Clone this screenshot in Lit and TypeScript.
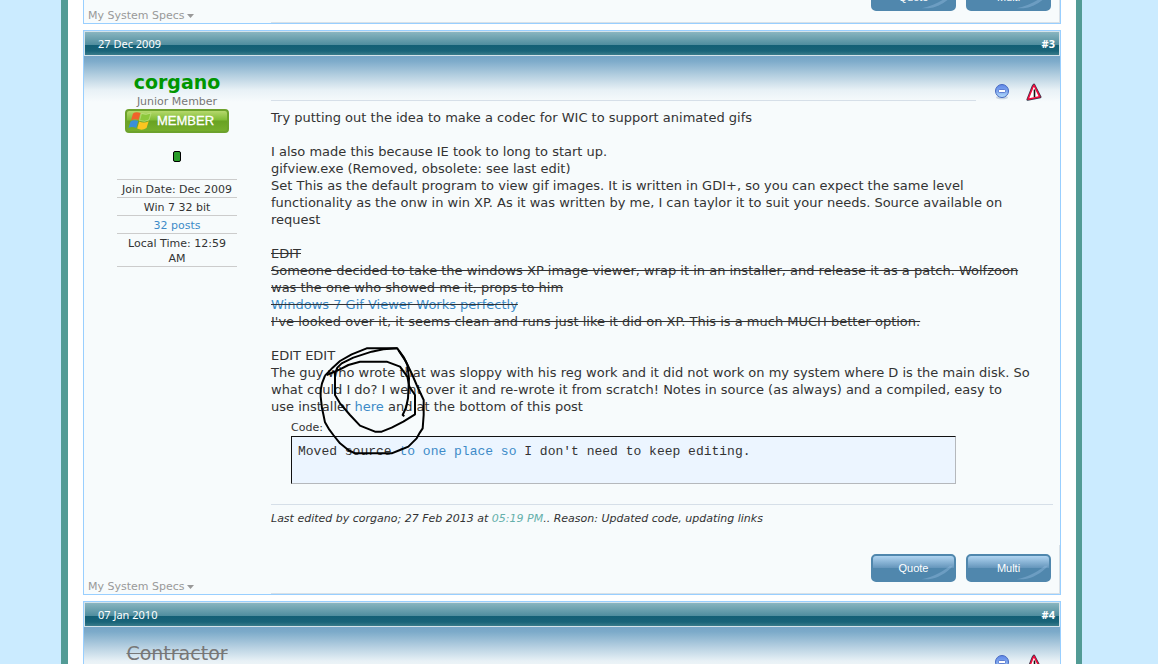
import { LitElement, html, css, svg, nothing } from "lit";
import { customElement, property } from "lit/decorators.js";

const swoosh = html`<svg class="swoosh" viewBox="0 0 40 16" aria-hidden="true">
  <path d="M2 16C16 13 27 7 35 0h4C31 9 20 15 10 16z" fill="#8db8dc" opacity=".45" />
</svg>`;

@customElement("glossy-button")
class GlossyButton extends LitElement {
  @property() label = "";

  static styles = css`
    :host {
      display: block;
    }
    .button {
      position: relative;
      display: block;
      width: 85px;
      height: 28px;
      padding: 0;
      border: 2px solid #5087ad;
      border-radius: 5px;
      overflow: hidden;
      background: linear-gradient(#b0d4f1 0, #6495bb 12px, #5087ad 12px);
      color: #fff;
      font: 11px/24px "Liberation Sans", Arial, sans-serif;
      cursor: pointer;
    }
    .swoosh {
      position: absolute;
      right: 0;
      bottom: 0;
      width: 34px;
      height: 15px;
    }
  `;

  render() {
    return html`<button class="button" type="button">${swoosh}${this.label}</button>`;
  }
}

@customElement("member-badge")
class MemberBadge extends LitElement {
  static styles = css`
    :host {
      display: block;
    }
    .badge {
      display: flex;
      align-items: center;
      gap: 5px;
      box-sizing: border-box;
      width: 104px;
      height: 24px;
      padding-left: 1px;
      border: 2px solid #6da22c;
      border-radius: 4px;
      background: linear-gradient(#b5d86c 0, #80bc35 9px, #69a222 10px, #76ae2c 100%);
      color: #fff;
      font: 13px/20px "Liberation Sans", Arial, sans-serif;
      -webkit-text-stroke: 0.3px #fff;
    }
    .flag {
      flex: none;
      width: 24px;
      height: 20px;
    }
  `;

  render() {
    return html`<div class="badge">
      <svg class="flag" viewBox="0 0 24 20" aria-hidden="true">
        <path d="M5 2.500Q8 .300 12.500 2L10.500 9Q7 7.500 3 9.500z" fill="#f0632a" />
        <path d="M13.500 2.500Q18 4.500 23 2L21 9Q17 11.500 11.500 9.500z" fill="#8cc83c" stroke="#d4eea0" stroke-width=".5" />
        <path d="M2.500 10.500Q6 8.500 10.200 10L8.200 17Q4 15 .5 17z" fill="#3a8fd8" />
        <path d="M11.200 10.500Q16 12.500 20.700 10.200L18.500 17Q14 20 9.200 17.500z" fill="#fcc520" />
      </svg>
      MEMBER
    </div>`;
  }
}

@customElement("forum-post")
class ForumPost extends LitElement {
  @property() date = "";
  @property() number = "";
  @property() kind = "full";

  static styles = css`
    :host {
      display: block;
      border: 1px solid #99cfff;
      background: #f7fbfc;
    }
    .bar {
      display: flex;
      justify-content: space-between;
      box-sizing: border-box;
      height: 25px;
      padding: 0 4px 0 13px;
      border: 1px solid #d5e3ea;
      background: linear-gradient(#89b5c0 0, #4f8d9e 13px, #135f75 13px, #196378 19px, #3a7c8b 100%);
      color: #fff;
      font: 11px/24px "Noto Sans", Tahoma, sans-serif;
    }
    .number {
      color: #fff;
      font-weight: bold;
      text-decoration: none;
    }
    .body {
      display: grid;
      grid-template-columns: 187px minmax(0, 1fr);
      min-height: 200px;
      background: linear-gradient(#76a4c6 0, #7dabca 5px, #b6d0e1 20px, #e8f1f6 34px, #f7fbfc 46px) top / 100% 46px
        no-repeat;
    }
    .user {
      display: flex;
      flex-direction: column;
      align-items: center;
      padding: 14px 1px 0 0;
      text-align: center;
    }
    .message {
      position: relative;
      padding-right: 7px;
    }
    .tools {
      display: grid;
      grid-template-columns: minmax(0, 1fr) auto;
      column-gap: 18px;
      height: 53px;
    }
    .rule {
      height: 44px;
      border-bottom: 1px solid #d6dfe8;
    }
    .icons {
      display: flex;
      gap: 16px;
      padding: 27px 11px 0 0;
    }
    .icon-button {
      width: 16px;
      height: 18px;
      padding: 0;
      border: 0;
      background: none;
      cursor: pointer;
    }
    .icon {
      display: block;
      width: 16px;
      height: 18px;
    }
    .foot {
      display: grid;
      grid-template-columns: 187px minmax(0, 1fr);
      height: 49px;
    }
    .specs {
      align-self: end;
      display: flex;
      align-items: center;
      gap: 2px;
      padding-left: 4px;
      color: #999;
      font-size: 11px;
      line-height: 15px;
      text-decoration: none;
    }
    .caret {
      width: 7px;
      height: 4px;
    }
    .actions {
      display: flex;
      justify-content: flex-end;
      gap: 10px;
      box-sizing: border-box;
      padding: 9px 8px 0 0;
      border: solid #d9e1e7;
      border-width: 0 1px 1px 0;
    }
  `;

  render() {
    return html`
      ${this.kind === "tail"
        ? nothing
        : html`<div class="bar">
              <span>${this.date}</span><a class="number" href="#post">${this.number}</a>
            </div>
            <div class="body">
              <div class="user"><slot name="user"></slot></div>
              <div class="message">
                <div class="tools">
                  <div class="rule"></div>
                  <div class="icons">
                    <button class="icon-button" type="button" aria-label="Reputation">
                      <svg class="icon" viewBox="0 0 16 18">
                        <defs>
                          <linearGradient id="orb" x2="0" y2="1">
                            <stop offset="0" stop-color="#5f86e8" />
                            <stop offset=".5" stop-color="#7da6ee" />
                            <stop offset="1" stop-color="#b8e0fc" />
                          </linearGradient>
                        </defs>
                        <ellipse cx="8" cy="14.500" rx="6" ry="1.800" fill="#9fb2c8" opacity=".5" />
                        <circle cx="8" cy="8" r="6.500" fill="url(#orb)" stroke="#4668c0" />
                        <rect x="4.500" y="6.500" width="7" height="3" rx="1" fill="#fff" stroke="#4668c8" stroke-width=".8" />
                      </svg>
                    </button>
                    <button class="icon-button" type="button" aria-label="Report">
                      <svg class="icon" viewBox="0 0 16 18">
                        <path
                          d="M8 1.800L14.300 14L1.600 16.600L6.800 3.500z"
                          fill="#fff"
                          stroke="#32394c"
                          stroke-width="2.400"
                          stroke-linejoin="round"
                        />
                        <path
                          d="M8 2.200L13.800 13.800L2 16.200L7 3.800z"
                          fill="#fff"
                          stroke="#f00a3c"
                          stroke-width="1.600"
                          stroke-linejoin="round"
                        />
                        <path d="M8.500 6.500v7.500" stroke="#141414" stroke-width="1.600" />
                      </svg>
                    </button>
                  </div>
                </div>
                <slot></slot>
              </div>
            </div>`}
      <div class="foot">
        <a class="specs" href="#specs">
          My System Specs
          <svg class="caret" viewBox="0 0 7 4" aria-hidden="true"><path d="M0 0h7L3.500 4z" fill="#999" /></svg>
        </a>
        <div class="actions">
          <glossy-button label="Quote"></glossy-button>
          <glossy-button label="Multi"></glossy-button>
        </div>
      </div>
    `;
  }
}

const scribble = svg`
  <path d="M75 122L66 145L62 165V185L66 220L70 238L75 262L88 284L100 300L120 325L145 345L165 355H275L300 345L325 335L350 310L360 292L368 280L371 240V195L350 150L335 115L318 80L292 40H200L155 58L120 78L98 98L75 122" />
  <path d="M80 120L120 103L145 90L180 80H260L300 95L322 125L328 155L345 180V238L310 260L275 278L245 290H225L180 272L150 240L120 205L105 180V115L112 98L125 85L160 68L215 50L250 43L292 40" />
  <path d="M296 46L312 68L322 90L327 130L324 190L318 218L308 240L313 244" />`;

@customElement("app-root")
class AppRoot extends LitElement {
  static styles = css`
    :host {
      display: block;
      box-sizing: border-box;
      height: 100vh;
      overflow: hidden;
      padding: 0 76px 0 61px;
      background: #cbebff;
      color: #333;
      font: 11px/15px "DejaVu Sans", Verdana, sans-serif;
    }
    .sheet {
      box-sizing: border-box;
      min-height: 100vh;
      padding: 0 15px;
      border: solid #529b95;
      border-width: 0 6px 0 7px;
      background: #fff;
    }
    .feed {
      display: flex;
      flex-direction: column;
      gap: 6px;
      margin-top: -27px;
    }
    a {
      color: #3d8bc8;
      text-decoration: none;
    }
    .name {
      font-size: 19px;
      line-height: 24px;
    }
    .active {
      color: #009600;
      font-weight: bold;
    }
    .gone {
      color: #777;
      text-decoration: line-through;
    }
    .rank {
      color: #777;
      line-height: 15px;
    }
    .status {
      box-sizing: border-box;
      width: 8px;
      height: 11px;
      margin: 18px 0 17px;
      border: 1px solid #000;
      border-radius: 2px;
      background: #299c29;
    }
    .facts {
      width: 120px;
      border-top: 1px solid #ccc;
    }
    .fact {
      padding: 2px 0 0;
      border-bottom: 1px solid #ccc;
    }
    .text {
      margin: 0;
      font-size: 13px;
      line-height: 17px;
    }
    .code-block {
      width: 85%;
      margin: 5px 0 20px 20px;
    }
    .code {
      box-sizing: border-box;
      height: 48px;
      margin: 1px 0 0;
      padding: 6px;
      border: 1px solid;
      border-color: #111 #b5b8bc #b5b8bc #111;
      background: #ecf5ff;
      font: 13px/17px "Liberation Mono", "Courier New", monospace;
    }
    .edited {
      height: 34px;
      padding-top: 6px;
      border-top: 1px solid #d6dfe8;
      font-style: italic;
    }
    .time {
      color: #65b0ab;
    }
    .ink {
      position: absolute;
      left: 34px;
      top: 289px;
      width: 140px;
      height: 112px;
      fill: none;
      stroke: #000;
      stroke-width: 6;
      stroke-linejoin: round;
      pointer-events: none;
    }
  `;

  render() {
    return html`<main class="sheet">
      <div class="feed">
        <forum-post kind="tail"></forum-post>
        <forum-post date="27 Dec 2009" number="#3">
          <a slot="user" class="name active" href="#corgano">corgano</a>
          <span slot="user" class="rank">Junior Member</span>
          <member-badge slot="user"></member-badge>
          <div slot="user" class="status"></div>
          <div slot="user" class="facts">
            <div class="fact">Join Date: Dec 2009</div>
            <div class="fact">Win 7 32 bit</div>
            <div class="fact"><a href="#posts">32 posts</a></div>
            <div class="fact">Local Time: 12:59<br />AM</div>
          </div>
          <p class="text">
            Try putting out the idea to make a codec for WIC to support animated gifs<br /><br />
            I also made this because IE took to long to start up.<br />
            gifview.exe (Removed, obsolete: see last edit)<br />
            Set This as the default program to view gif images. It is written in GDI+, so you can expect the same level<br />
            functionality as the onw in win XP. As it was written by me, I can taylor it to suit your needs. Source
            available on<br />
            request<br /><br />
            <s
              >EDIT<br />Someone decided to take the windows XP image viewer, wrap it in an installer, and release it as
              a patch. Wolfzoon<br />was the one who showed me it, props to him<br /><a href="#viewer"
                >Windows 7 Gif Viewer Works perfectly</a
              ><br />I've looked over it, it seems clean and runs just like it did on XP. This is a much MUCH better
              option.</s
            ><br /><br />
            EDIT EDIT<br />
            The guy who wrote that was sloppy with his reg work and it did not work on my system where D is the main
            disk. So<br />
            what could I do? I went over it and re-wrote it from scratch! Notes in source (as always) and a compiled,
            easy to<br />
            use installer <a href="#here">here</a> and at the bottom of this post
          </p>
          <div class="code-block">
            Code:
            <pre class="code">Moved source <a href="#source">to one place so</a> I don't need to keep editing.</pre>
          </div>
          <div class="edited">
            Last edited by corgano; 27 Feb 2013 at <span class="time">05:19 PM</span>.. Reason: Updated code, updating
            links
          </div>
          <svg class="ink" viewBox="15 30 420 336" aria-hidden="true">${scribble}</svg>
        </forum-post>
        <forum-post date="07 Jan 2010" number="#4">
          <span slot="user" class="name gone">Contractor</span>
        </forum-post>
      </div>
    </main>`;
  }
}
